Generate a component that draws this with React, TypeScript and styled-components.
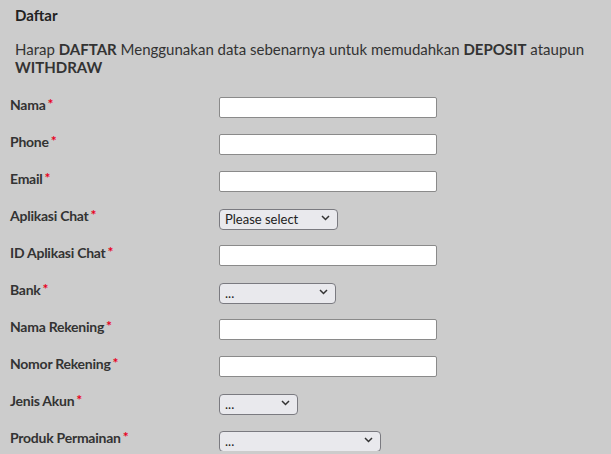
import React from "react";
import styled, { createGlobalStyle } from "styled-components";

const GlobalStyle = createGlobalStyle`
  body {
    margin: 0;
    background: #cccccc;
    font-family: Lato, "Open Sans", sans-serif;
    color: #333333;
  }
`;

const Page = styled.div`
  padding: 5px 0 0 0;
`;

const Title = styled.h3`
  margin: 0;
  padding: 0 15px;
  font-size: 15px;
  line-height: 20px;
  font-weight: 700;
  color: #222;
`;

const Intro = styled.p`
  margin: 15px 0 0 0;
  padding: 0 15px;
  font-size: 15px;
  line-height: 18px;
  font-weight: 400;
  color: #333;
`;

const Form = styled.form`
  display: flex;
  flex-direction: column;
  gap: 16px;
  padding: 21px 0 0 10px;
`;

const Row = styled.div`
  display: grid;
  grid-template-columns: 209px auto;
  align-items: start;
`;

const Label = styled.label`
  font-size: 14px;
  line-height: 16px;
  font-weight: 700;
  letter-spacing: -0.25px;
  color: #333;
`;

const Star = styled.span`
  color: #e8001c;
  margin-left: 2px;
  font-size: 14px;
  position: relative;
  top: -1px;
`;

const TextInput = styled.input`
  box-sizing: border-box;
  width: 218px;
  height: 21px;
  margin: 0;
  padding: 1px 4px;
  background: #ffffff;
  border: 1px solid #8a8a8a;
  border-radius: 2px;
  font-family: inherit;
  font-size: 13px;
  outline: none;
`;

const SelectWrap = styled.div<{ w: number }>`
  position: relative;
  width: ${p => p.w}px;
  height: 21px;
`;

const Select = styled.select`
  box-sizing: border-box;
  appearance: none;
  -webkit-appearance: none;
  width: 100%;
  height: 21px;
  margin: 0;
  padding: 0 0 0 5px;
  background: #e9e9ed;
  border: 1px solid #7a7a80;
  border-radius: 4px;
  font-family: Lato, sans-serif;
  font-size: 13px;
  color: #222;
  outline: none;
`;

const Chevron = styled.svg`
  position: absolute;
  right: 8px;
  top: 7px;
  width: 9px;
  height: 6px;
  pointer-events: none;
`;

type Field = { label: string; kind: "text" | "select"; width?: number; placeholder?: string };

const fields: Field[] = [
  { label: "Nama", kind: "text" },
  { label: "Phone", kind: "text" },
  { label: "Email", kind: "text" },
  { label: "Aplikasi Chat", kind: "select", width: 119, placeholder: "Please select" },
  { label: "ID Aplikasi Chat", kind: "text" },
  { label: "Bank", kind: "select", width: 117, placeholder: "..." },
  { label: "Nama Rekening", kind: "text" },
  { label: "Nomor Rekening", kind: "text" },
  { label: "Jenis Akun", kind: "select", width: 79, placeholder: "..." },
  { label: "Produk Permainan", kind: "select", width: 162, placeholder: "..." },
];

export default function App() {
  return (
    <Page>
      <GlobalStyle />
      <Title>Daftar</Title>
      <Intro>
        Harap <b>DAFTAR</b> Menggunakan data sebenarnya untuk memudahkan <b>DEPOSIT</b> ataupun{" "}
        <b>WITHDRAW</b>
      </Intro>
      <Form>
        {fields.map(f => (
          <Row key={f.label}>
            <Label>
              {f.label}
              <Star>*</Star>
            </Label>
            {f.kind === "text" ? (
              <TextInput type="text" />
            ) : (
              <SelectWrap w={f.width || 120}>
                <Select defaultValue="">
                  <option value="">{f.placeholder}</option>
                </Select>
                <Chevron viewBox="0 0 9 6">
                  <path d="M1 1l3.5 3.5L8 1" fill="none" stroke="#333" strokeWidth="1.5" />
                </Chevron>
              </SelectWrap>
            )}
          </Row>
        ))}
      </Form>
    </Page>
  );
}
